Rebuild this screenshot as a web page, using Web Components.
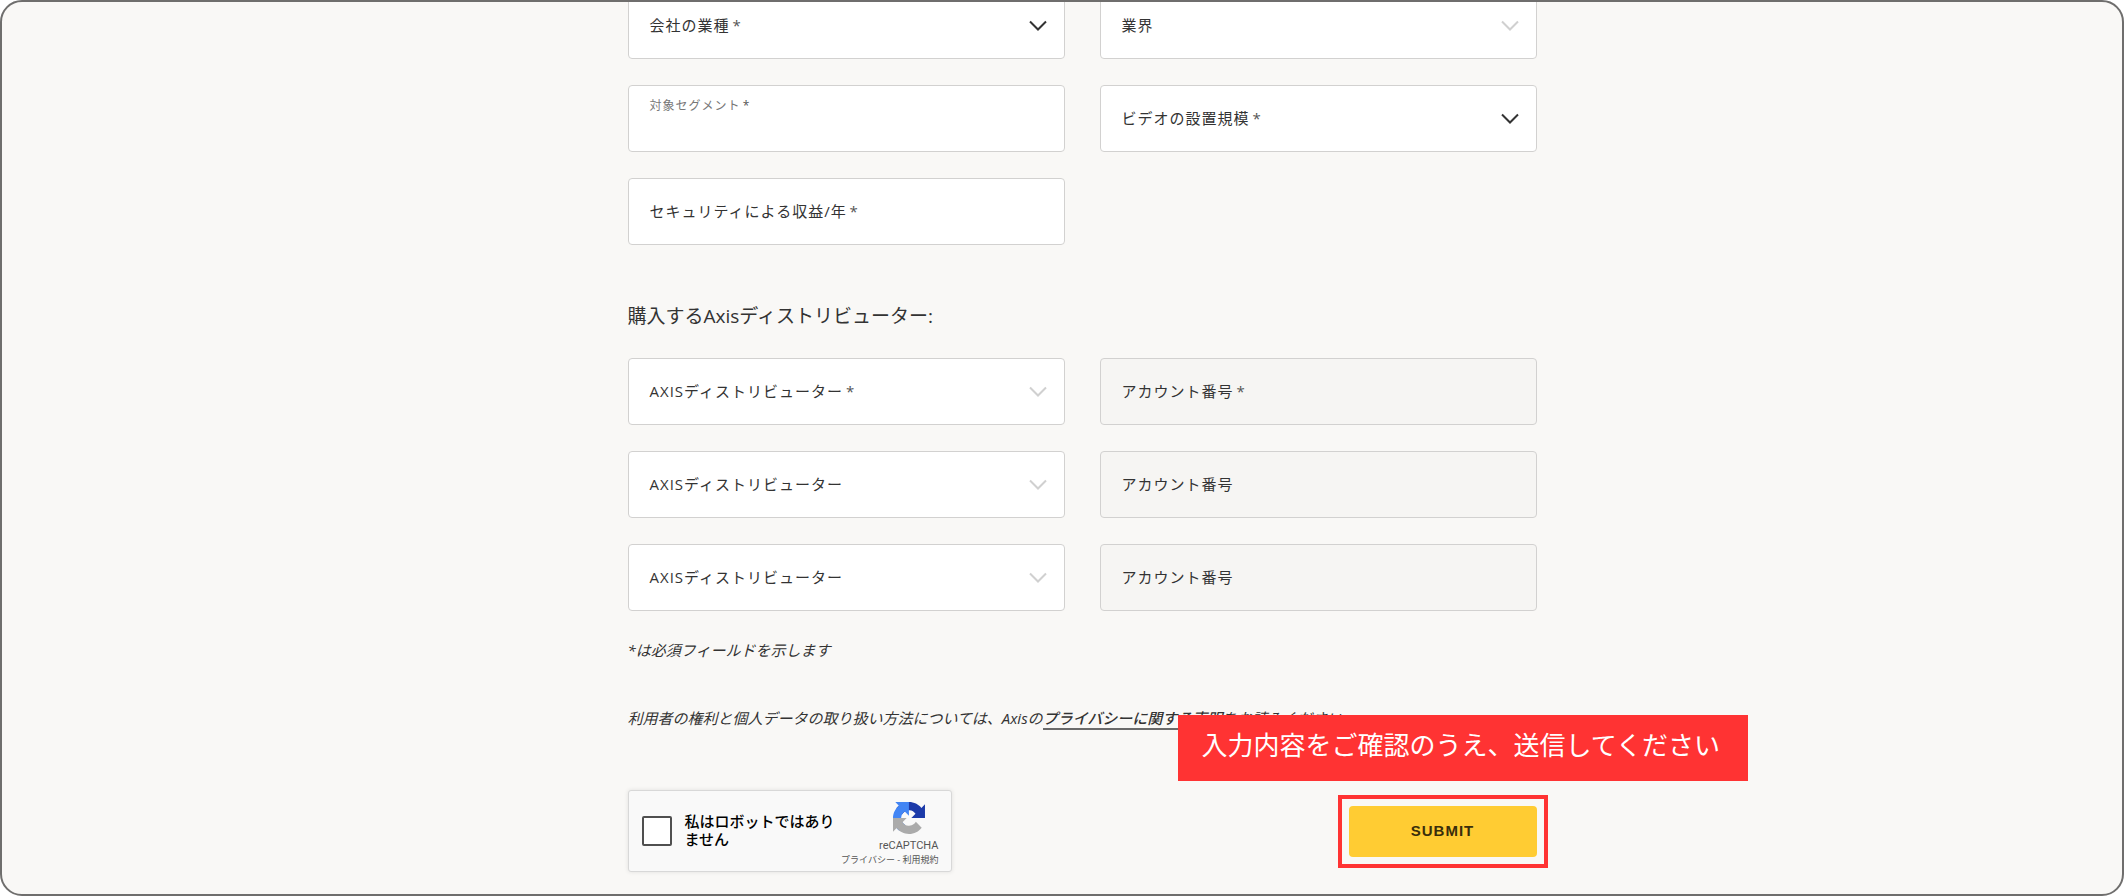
<!DOCTYPE html>
<html lang="ja">
<head>
<meta charset="utf-8">
<meta name="viewport" content="width=device-width, initial-scale=1">
<title>Axis パートナー申請</title>
<style>
  body {
    margin: 0;
    background: #fff;
    color: #333;
    font-family: "Open Sans", "Noto Sans CJK JP", sans-serif;
    font-size: 15px;
    line-height: 24px;
  }
</style>
</head>
<body>
<page-frame>
  <partner-form></partner-form>
</page-frame>

<script>
class PageFrame extends HTMLElement {
  connectedCallback() {
    this.attachShadow({ mode: 'open' });
    this.shadowRoot.innerHTML = `
      <style>
        :host {
          display: block;
          box-sizing: border-box;
          min-height: 100vh;
          padding: 0 20px 16px 60px;
          overflow: hidden;
          border: 2px solid #6f6e6d;
          border-radius: 22px;
          background: #f9f8f6;
        }
      </style>
      <slot></slot>
    `;
  }
}

class FormField extends HTMLElement {
  connectedCallback() {
    const type = this.getAttribute('type') || 'text';
    const required = this.hasAttribute('required');
    const disabled = this.hasAttribute('disabled') ? 'disabled' : '';
    const control = type === 'select'
      ? `<select id="control" ${disabled}><option value=""></option></select>
         <svg viewBox="0 0 18 11" aria-hidden="true"><path d="M1 1.5 9 9.5 17 1.5"/></svg>`
      : `<input id="control" type="text" ${disabled}>`;

    this.attachShadow({ mode: 'open' });
    this.shadowRoot.innerHTML = `
      <style>
        :host {
          display: grid;
          box-sizing: border-box;
          height: 67px;
          border: 1px solid #d2d1d0;
          border-radius: 4px;
          background: #fff;
          letter-spacing: 1px;
        }
        :host([type="text"][disabled]) {
          background: #f6f5f3;
        }
        label, input, select, svg {
          grid-area: 1 / 1;
        }
        label {
          align-self: center;
          padding: 0 21px 1px;
          pointer-events: none;
          z-index: 1;
        }
        :host([floating]) label {
          align-self: start;
          padding-top: 8px;
          font-size: 12px;
          color: #777;
        }
        .star {
          margin-left: -2px;
          color: #555;
        }
        input, select {
          appearance: none;
          box-sizing: border-box;
          width: 100%;
          height: 100%;
          margin: 0;
          padding: 20px 21px 0;
          border: 0;
          border-radius: 4px;
          background: transparent;
          color: inherit;
          font: inherit;
        }
        svg {
          width: 18px;
          height: 11px;
          align-self: center;
          justify-self: end;
          margin-right: 17px;
          pointer-events: none;
          fill: none;
          stroke: #333;
          stroke-width: 2;
        }
        :host([disabled]) svg,
        :host([muted]) svg {
          stroke: #d0d0d0;
        }
      </style>
      <label for="control"><slot></slot>${required ? ' <span class="star">*</span>' : ''}</label>
      ${control}
    `;
  }
}

class CaptchaBox extends HTMLElement {
  connectedCallback() {
    this.attachShadow({ mode: 'open' });
    this.shadowRoot.innerHTML = `
      <style>
        :host {
          display: flex;
          box-sizing: border-box;
          width: 324px;
          height: 82px;
          padding: 0 12px 0 13px;
          align-items: center;
          border: 1px solid #d8d8d8;
          border-radius: 3px;
          background: #f9f9f9;
          box-shadow: 0 0 4px rgba(0, 0, 0, 0.1);
          color: #000;
        }
        input {
          appearance: none;
          flex: none;
          box-sizing: border-box;
          width: 30px;
          height: 30px;
          margin: 0 13px 0 0;
          border: 2px solid #4f4f4f;
          border-radius: 2px;
          background: #fff;
        }
        label {
          flex: none;
          width: 152px;
          padding-bottom: 2px;
          line-height: 18px;
          font-weight: 500;
        }
        .brand {
          display: flex;
          flex: 1;
          flex-direction: column;
          align-items: flex-end;
          padding-top: 6px;
          color: #555;
          white-space: nowrap;
        }
        .logo {
          display: flex;
          flex-direction: column;
          align-items: center;
          font: 11px/14px Roboto, "Liberation Sans", sans-serif;
        }
        svg {
          width: 32px;
          height: 32px;
          margin-bottom: 5px;
        }
        .links {
          font-size: 9px;
          line-height: 14px;
        }
        a {
          color: inherit;
          text-decoration: none;
        }
      </style>
      <input type="checkbox" id="robot">
      <label for="robot">私はロボットではありません</label>
      <div class="brand">
        <div class="logo">
          <svg viewBox="0 0 64 64" aria-hidden="true">
            <path fill="#1c3aa9" d="M64 31.955l-.033-1.37V4.687l-7.16 7.16C50.948 4.674 42.033.093 32.05.093c-10.4 0-19.622 4.96-25.458 12.64l11.736 11.86a15.55 15.55 0 0 1 4.754-5.334c2.05-1.6 4.952-2.906 8.968-2.906.485 0 .86.057 1.135.163 4.976.393 9.288 3.14 11.828 7.124l-8.307 8.307L64 31.953"/>
            <path fill="#4285f4" d="M31.862.094l-1.37.033H4.594l7.16 7.16C4.58 13.147 0 22.06 0 32.046c0 10.4 4.96 19.622 12.64 25.458L24.5 45.768a15.55 15.55 0 0 1-5.334-4.754c-1.6-2.05-2.906-4.952-2.906-8.968 0-.485.057-.86.163-1.135.393-4.976 3.14-9.288 7.124-11.828l8.307 8.307L31.86.095"/>
            <path fill="#ababab" d="M.001 32.045l.033 1.37v25.898l7.16-7.16c5.86 7.173 14.774 11.754 24.76 11.754 10.4 0 19.622-4.96 25.458-12.64l-11.736-11.86a15.55 15.55 0 0 1-4.754 5.334c-2.05 1.6-4.952 2.906-8.968 2.906-.485 0-.86-.057-1.135-.163-4.976-.393-9.288-3.14-11.828-7.124l8.307-8.307c-10.522.04-22.4.066-27.295-.005"/>
          </svg>
          <span>reCAPTCHA</span>
        </div>
        <div class="links"><a href="#">プライバシー</a> - <a href="#">利用規約</a></div>
      </div>
    `;
  }
}

class SubmitCallout extends HTMLElement {
  connectedCallback() {
    this.attachShadow({ mode: 'open' });
    this.shadowRoot.innerHTML = `
      <style>
        :host {
          display: block;
          position: relative;
        }
        button {
          display: block;
          width: 188px;
          height: 51px;
          padding: 0;
          border: 0;
          border-radius: 4px;
          background: #fc3;
          color: #3a2e0b;
          font: bold 15px/24px "Liberation Sans", Arial, sans-serif;
          letter-spacing: 1px;
        }
        /* red outline around the button and the note above it */
        .outline {
          position: absolute;
          inset: -11px;
          border: 4px solid #f33;
          pointer-events: none;
        }
        .note {
          position: absolute;
          right: -211px;
          bottom: 76px;
          box-sizing: border-box;
          width: 570px;
          padding: 12px 24px 18px;
          background: #f33;
          color: #fff;
          font-size: 26px;
          line-height: 36px;
          white-space: nowrap;
        }
      </style>
      <button type="submit">SUBMIT</button>
      <div class="outline"></div>
      <div class="note"><slot></slot></div>
    `;
  }
}

class PartnerForm extends HTMLElement {
  connectedCallback() {
    this.attachShadow({ mode: 'open' });
    this.shadowRoot.innerHTML = `
      <style>
        :host {
          display: block;
          max-width: 909px;
          margin: -10px auto 0;
        }
        .fields {
          display: grid;
          grid-template-columns: 1fr 1fr;
          gap: 26px 35px;
        }
        h2 {
          margin: 57px 0 28px;
          font-size: 19px;
          font-weight: 400;
          line-height: 28px;
        }
        p {
          margin: 0;
          font-style: italic;
        }
        .required {
          margin: 27px 0 44px;
        }
        .privacy a {
          border-bottom: 2px solid #6a6a6a;
          color: inherit;
          font-weight: 500;
          text-decoration: none;
        }
        footer {
          display: flex;
          align-items: center;
          justify-content: space-between;
          margin-top: 60px;
        }
      </style>
      <form>
        <div class="fields">
          <form-field type="select" required>会社の業種</form-field>
          <form-field type="select" disabled>業界</form-field>
          <form-field type="text" required floating>対象セグメント</form-field>
          <form-field type="select" required>ビデオの設置規模</form-field>
          <form-field type="text" required>セキュリティによる収益/年</form-field>
        </div>
        <h2>購入するAxisディストリビューター:</h2>
        <div class="fields">
          <form-field type="select" required muted>AXISディストリビューター</form-field>
          <form-field type="text" required disabled>アカウント番号</form-field>
          <form-field type="select" muted>AXISディストリビューター</form-field>
          <form-field type="text" disabled>アカウント番号</form-field>
          <form-field type="select" muted>AXISディストリビューター</form-field>
          <form-field type="text" disabled>アカウント番号</form-field>
        </div>
        <p class="required">*は必須フィールドを示します</p>
        <p class="privacy">利用者の権利と個人データの取り扱い方法については、Axisの<a href="#">プライバシーに関する声明</a>をお読みください。</p>
        <footer>
          <captcha-box></captcha-box>
          <submit-callout>入力内容をご確認のうえ、送信してください</submit-callout>
        </footer>
      </form>
    `;
  }
}

customElements.define('page-frame', PageFrame);
customElements.define('form-field', FormField);
customElements.define('captcha-box', CaptchaBox);
customElements.define('submit-callout', SubmitCallout);
customElements.define('partner-form', PartnerForm);
</script>
</body>
</html>
